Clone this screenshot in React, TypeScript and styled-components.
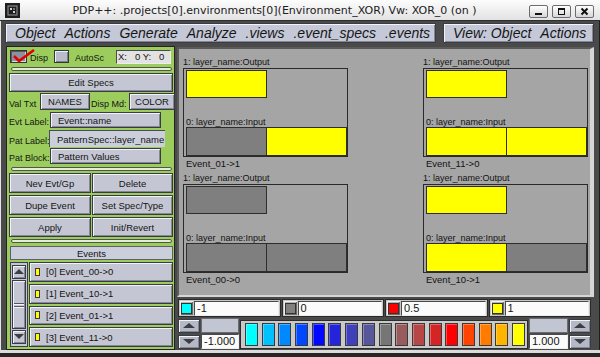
import styled, { createGlobalStyle, css } from "styled-components";

const GlobalStyle = createGlobalStyle`
  * { box-sizing: border-box; }
  html, body { margin: 0; padding: 0; background: #4a4a4a; }
  body {
    font-family: "Liberation Sans", Arial, sans-serif;
    color: #141414;
  }
`;

const raised = css`
  background: #c4c7d3;
  border: 1px solid #3a3c44;
  box-shadow: inset 1px 1px 0 #f2f3f9, inset -1px -1px 0 #858894;
`;

const sunken = css`
  border: 1px solid;
  border-color: #4a4a4a #ededed #ededed #4a4a4a;
`;

const Window = styled.div`
  width: 600px;
  height: 357px;
  display: flex;
  flex-direction: column;
  background: #4a4a4a;
  border-bottom: 4px solid #262626;
  overflow: hidden;
`;

const TitleBar = styled.header`
  height: 21px;
  flex: none;
  display: flex;
  align-items: center;
  padding: 0 6px 0 5px;
  background: linear-gradient(#fdfdfd, #e2e2e2);
  border-bottom: 1px solid #2e2e2e;
`;

const Title = styled.div`
  flex: 1;
  text-align: center;
  font-family: "DejaVu Sans", sans-serif;
  font-size: 11px;
  color: #202020;
  white-space: nowrap;
`;

const WinButtons = styled.div`
  display: flex;
  gap: 4px;
  margin-top: 3px;
`;

const WinButton = styled.div`
  width: 19px;
  height: 13px;
  display: grid;
  place-items: center;
  border: 1px solid #6c6c6c;
  border-radius: 2px;
  background: linear-gradient(#ffffff, #d6d6d6);
`;

const Body = styled.div`
  height: 329px;
  flex: none;
  display: flex;
  flex-direction: column;
  padding: 2px 5px 0 4px;
  border-left: 1px solid #e4e4e4;
  border-right: 1px solid #1e1e1e;
`;

const Footer = styled.div`
  height: 3px;
  flex: none;
  background: #dcdcdc;
`;

const MenuRow = styled.nav`
  display: flex;
  gap: 7px;
  height: 20px;
`;

const MenuBar = styled.div<{ $w?: number }>`
  ${raised};
  background: #c5c8d6;
  width: ${(p) => (p.$w ? `${p.$w}px` : "auto")};
  flex: ${(p) => (p.$w ? "none" : "1")};
  display: flex;
  align-items: center;
  gap: 9px;
  padding-left: 9px;
  overflow: hidden;
`;

const MenuItem = styled.span`
  font-size: 14px;
  font-style: italic;
  line-height: 1;
  color: #161616;
  white-space: nowrap;
`;

const Main = styled.div`
  display: flex;
  gap: 2px;
  height: 304px;
  margin-top: 3px;
  padding-left: 1px;
`;

/* left control panel */
const Panel = styled.aside`
  width: 169px;
  flex: none;
  display: flex;
  flex-direction: column;
  padding: 3px 1px 0 2px;
  background: #9ccd5c;
  border: 1px solid #242424;
  font-size: 9.5px;
`;

const Row = styled.div<{ $h: number; $mt: number }>`
  display: flex;
  align-items: flex-end;
  height: ${(p) => p.$h}px;
  margin-top: ${(p) => p.$mt}px;
`;

const Label = styled.span<{ $w?: number; $ml?: number }>`
  flex: none;
  width: ${(p) => (p.$w ? `${p.$w}px` : "auto")};
  margin-left: ${(p) => p.$ml ?? 0}px;
  font-size: 9px;
  line-height: 12px;
  white-space: nowrap;
`;

const Toggle = styled.div<{ $on?: boolean; $w: number; $ml: number }>`
  position: relative;
  flex: none;
  width: ${(p) => p.$w}px;
  height: 13px;
  margin-left: ${(p) => p.$ml}px;
  margin-bottom: 1px;
  border: 1px solid #34363c;
  background: ${(p) => (p.$on ? "#8d919d" : "#b9bdc9")};
  box-shadow: ${(p) =>
    p.$on
      ? "inset 1px 1px 0 #55585f, inset -1px -1px 0 #d8dae2"
      : "inset 1px 1px 0 #eef0f6, inset -1px -1px 0 #7c7f8a"};
  svg {
    position: absolute;
    left: 1px;
    top: -4px;
  }
`;

const Coords = styled.div`
  ${sunken};
  width: 55px;
  height: 14px;
  margin: 0 2px 0 auto;
  padding-left: 1px;
  background: #e2e2e2;
  line-height: 12px;
  white-space: pre;
`;

const Separator = styled.div<{ $mt: number }>`
  height: 4px;
  margin: ${(p) => p.$mt}px 1px 0 2px;
  border: 1px solid #4d5846;
  border-radius: 2px;
  background: #e6ecdc;
`;

const PanelButton = styled.div<{ $w?: number; $ml?: number }>`
  ${raised};
  flex: ${(p) => (p.$w ? "none" : "1")};
  width: ${(p) => (p.$w ? `${p.$w}px` : "auto")};
  height: 100%;
  margin-left: ${(p) => p.$ml ?? 0}px;
  display: flex;
  align-items: center;
  justify-content: center;
  white-space: nowrap;
`;

const TextField = styled.div<{ $w: number; $flat?: boolean }>`
  flex: none;
  width: ${(p) => p.$w}px;
  height: 100%;
  display: flex;
  align-items: center;
  padding-left: 7px;
  white-space: nowrap;
  ${(p) =>
    p.$flat
      ? css`
          background: #cbcfdb;
          border-top: 1px solid #4a4c54;
          border-left: 1px solid #4a4c54;
        `
      : raised}
`;

const ButtonGrid = styled.div`
  display: grid;
  grid-template-columns: 82px 81px;
  grid-auto-rows: 20px;
  gap: 2px 1px;
  margin-top: 2px;
`;

const EventsHeader = styled.div`
  height: 14px;
  margin: 3px 0 0 1px;
  display: flex;
  align-items: center;
  justify-content: center;
  background: #cbcedb;
  border: 1px solid #5d6069;
`;

const EventList = styled.div`
  display: flex;
  gap: 1px;
  height: 85px;
  margin: 2px 0 0 1px;
`;

const ScrollBar = styled.div`
  width: 18px;
  flex: none;
  display: flex;
  flex-direction: column;
  gap: 1px;
  padding: 2px 1px;
  background: #c4c7d3;
  border: 1px solid #3c3e46;
`;

const ScrollArrow = styled.div`
  ${raised};
  height: 14px;
  flex: none;
  display: grid;
  place-items: center;
`;

const ScrollThumb = styled.div`
  ${raised};
  flex: 1;
  display: flex;
  flex-direction: column;
  justify-content: center;
  gap: 2px;
  padding: 0 1px;
  span {
    height: 1px;
    background: #55585f;
    box-shadow: 0 1px 0 #f4f5fa;
  }
`;

const Items = styled.div`
  flex: 1;
  display: flex;
  flex-direction: column;
  gap: 2px;
`;

const EventItem = styled.div`
  ${raised};
  flex: 1;
  display: flex;
  align-items: center;
  padding-left: 5px;
  white-space: nowrap;
`;

const Marker = styled.i`
  width: 5px;
  height: 8px;
  margin-right: 6px;
  background: #ffff00;
  border: 1px solid #3a3a3a;
`;

/* right side: pattern view */
const RightCol = styled.section`
  flex: 1;
  display: flex;
  flex-direction: column;
  padding-top: 1px;
`;

const View = styled.div`
  height: 250px;
  flex: none;
  display: grid;
  grid-template-columns: 165px 165px;
  grid-template-rows: auto auto;
  column-gap: 75px;
  row-gap: 3px;
  align-content: start;
  padding: 7px 0 0 4px;
  background: #a5a5a5;
  border-style: solid;
  border-width: 2px 4px 2px 2px;
  border-color: #5a5a5a #d6d6d6 #d6d6d6 #5a5a5a;
`;

const Block = styled.div`
  display: flex;
  flex-direction: column;
`;

const LayerLabel = styled.div<{ $lh: number }>`
  font-size: 9px;
  line-height: ${(p) => p.$lh}px;
  color: #121212;
  white-space: nowrap;
`;

const PatternBox = styled.div`
  height: 89px;
  display: flex;
  flex-direction: column;
  justify-content: space-between;
  padding: 1px 0 0 2px;
  border: 1px solid #2a2a2a;
`;

const Cell = styled.div<{ $on: boolean; $h: number }>`
  width: 81px;
  height: ${(p) => p.$h}px;
  background: ${(p) => (p.$on ? "#ffff00" : "#7f7f7f")};
  border: 1px solid #2e2e2e;
  & + & {
    margin-left: -1px;
  }
`;

const CellRow = styled.div`
  display: flex;
`;

const EventName = styled.div`
  margin-top: 1px;
  padding-left: 3px;
  font-size: 9.5px;
  line-height: 11px;
  color: #121212;
`;

/* color scale */
const ScaleArea = styled.div`
  height: 50px;
  margin-top: 2px;
  display: flex;
  flex-direction: column;
  gap: 1px;
`;

const ScaleRow = styled.div`
  display: grid;
  grid-template-columns: repeat(4, 1fr);
  gap: 1px;
  height: 18px;
  padding: 0 3px 0 1px;
`;

const ScaleItem = styled.div`
  display: flex;
  align-items: center;
  gap: 1px;
  padding: 0 1px;
  background: #c6c6c6;
  border: 1px solid #2a2a2a;
`;

const SwatchButton = styled.div<{ $c: string }>`
  width: 13px;
  height: 14px;
  flex: none;
  display: grid;
  place-items: center;
  background: #b6b6b6;
  box-shadow: inset 1px 1px 0 #f0f0f0, inset -1px -1px 0 #6a6a6a;
  &::after {
    content: "";
    width: 9px;
    height: 9px;
    background: ${(p) => p.$c};
    border: 1px solid #333;
  }
`;

const ValueField = styled.div<{ $h: number }>`
  ${sunken};
  flex: 1;
  height: ${(p) => p.$h}px;
  padding-left: 2px;
  background: #fbfbfb;
  font-size: 11px;
  line-height: ${(p) => p.$h - 2}px;
  white-space: nowrap;
`;

const ScaleBottom = styled.div`
  display: flex;
  gap: 1px;
  flex: 1;
  padding-left: 1px;
`;

const Spin = styled.div`
  width: 22px;
  flex: none;
  display: flex;
  flex-direction: column;
  gap: 2px;
  padding-top: 1px;
`;

const SpinButton = styled.div`
  ${raised};
  background: #b5b9c5;
  flex: 1;
  display: grid;
  place-items: center;
`;

const RangeBox = styled.div<{ $w: number }>`
  width: ${(p) => p.$w}px;
  flex: none;
  display: flex;
  flex-direction: column;
  gap: 1px;
  div:first-child {
    flex: 1;
    background: #c2c5d2;
    border: 1px solid #6a6c74;
  }
`;

const SwatchPanel = styled.div`
  width: 288px;
  flex: none;
  margin-top: 2px;
  display: flex;
  align-items: center;
  justify-content: space-between;
  padding: 0 2px 0 4px;
  background: #c9c9c9;
  border: 1px solid #2c2c2c;
`;

const Swatch = styled.div<{ $c: string }>`
  width: 13px;
  height: 23px;
  background: ${(p) => p.$c};
  border: 1px solid #3a3a3a;
  box-shadow: inset 1px 1px 0 rgba(255, 255, 255, 0.3);
`;

const events = [
  { name: "Event_01->1", out: true, inp: [false, true] },
  { name: "Event_11->0", out: true, inp: [true, true] },
  { name: "Event_00->0", out: false, inp: [false, false] },
  { name: "Event_10->1", out: true, inp: [true, false] },
];

const scale = [
  "#00ffff", "#00c0ff", "#0088ff", "#0048ff", "#0008ff", "#2424da",
  "#4040ba", "#56569a", "#767676", "#985c5c", "#b84646", "#d62424",
  "#ff0000", "#ff4400", "#ff7c00", "#ffb400", "#ffff00",
];

const UpArrow = ({ w = 10 }: { w?: number }) => (
  <svg width={w} height="6" viewBox={`0 0 ${w} 6`}>
    <polygon points={`0,5 ${w / 2},0 ${w},5`} fill="#3c3e44" />
  </svg>
);

const DownArrow = ({ w = 10 }: { w?: number }) => (
  <svg width={w} height="6" viewBox={`0 0 ${w} 6`}>
    <polygon points={`0,0 ${w / 2},5 ${w},0`} fill="#3c3e44" />
  </svg>
);

export default function App() {
  return (
    <>
      <GlobalStyle />
      <Window>
        <TitleBar>
          <svg width="15" height="15" viewBox="0 0 15 15">
            <rect width="15" height="15" fill="#1e1e1e" />
            <rect x="3" y="3" width="9" height="9" fill="none" stroke="#9a9a9a" />
            <rect x="5" y="5" width="2" height="2" fill="#cfcfcf" />
            <rect x="8" y="8" width="2" height="2" fill="#cfcfcf" />
            <rect x="8" y="5" width="2" height="2" fill="#707070" />
          </svg>
          <Title>PDP++: .projects[0].environments[0](Environment_XOR) Vw: XOR_0 (on )</Title>
          <WinButtons>
            <WinButton>
              <svg width="9" height="9" viewBox="0 0 9 9">
                <rect x="1" y="6" width="7" height="2" fill="#111" />
              </svg>
            </WinButton>
            <WinButton>
              <svg width="9" height="9" viewBox="0 0 9 9">
                <rect x="1.5" y="1.5" width="6" height="6" fill="none" stroke="#111" />
                <rect x="1" y="1" width="7" height="2" fill="#111" />
              </svg>
            </WinButton>
            <WinButton>
              <svg width="9" height="9" viewBox="0 0 9 9">
                <path d="M1.5 1.5 L7.5 7.5 M7.5 1.5 L1.5 7.5" stroke="#111" strokeWidth="2" />
              </svg>
            </WinButton>
          </WinButtons>
        </TitleBar>

        <Body>
          <MenuRow>
            <MenuBar $w={431}>
              <MenuItem>Object</MenuItem>
              <MenuItem>Actions</MenuItem>
              <MenuItem>Generate</MenuItem>
              <MenuItem>Analyze</MenuItem>
              <MenuItem>.views</MenuItem>
              <MenuItem>.event_specs</MenuItem>
              <MenuItem>.events</MenuItem>
            </MenuBar>
            <MenuBar>
              <MenuItem>View: Object</MenuItem>
              <MenuItem>Actions</MenuItem>
            </MenuBar>
          </MenuRow>

          <Main>
            <Panel>
              <Row $h={14} $mt={0}>
                <Toggle $on $w={17} $ml={1}>
                  <svg width="24" height="16" viewBox="0 0 24 16">
                    <path d="M2 9 L7 14 L22 3" fill="none" stroke="#e00000" strokeWidth="2.5" />
                  </svg>
                </Toggle>
                <Label $ml={3}>Disp</Label>
                <Toggle $w={15} $ml={6} />
                <Label $ml={6}>AutoSc</Label>
                <Coords>{"X:   0 Y:   0"}</Coords>
              </Row>
              <Separator $mt={3} />
              <Row $h={19} $mt={2}>
                <PanelButton>Edit Specs</PanelButton>
              </Row>
              <Row $h={17} $mt={1}>
                <Label $w={31}>Val Txt</Label>
                <PanelButton $w={50}>NAMES</PanelButton>
                <Label $w={38} $ml={1}>Disp Md:</Label>
                <PanelButton $w={46}>COLOR</PanelButton>
              </Row>
              <Row $h={16} $mt={2}>
                <Label $w={41}>Evt Label:</Label>
                <TextField $w={111}>Event::name</TextField>
              </Row>
              <Row $h={17} $mt={2}>
                <Label $w={40}>Pat Label:</Label>
                <TextField $w={116} $flat>
                  PatternSpec::layer_name
                </TextField>
              </Row>
              <Row $h={16} $mt={1}>
                <Label $w={41}>Pat Block:</Label>
                <TextField $w={111}>Pattern Values</TextField>
              </Row>
              <Separator $mt={3} />
              <ButtonGrid>
                <PanelButton>Nev Evt/Gp</PanelButton>
                <PanelButton>Delete</PanelButton>
                <PanelButton>Dupe Event</PanelButton>
                <PanelButton>Set Spec/Type</PanelButton>
                <PanelButton>Apply</PanelButton>
                <PanelButton>Init/Revert</PanelButton>
              </ButtonGrid>
              <Separator $mt={2} />
              <EventsHeader>Events</EventsHeader>
              <EventList>
                <ScrollBar>
                  <ScrollArrow>
                    <UpArrow />
                  </ScrollArrow>
                  <ScrollThumb>
                    <span />
                    <span />
                  </ScrollThumb>
                  <ScrollArrow>
                    <DownArrow />
                  </ScrollArrow>
                </ScrollBar>
                <Items>
                  {["[0] Event_00->0", "[1] Event_10->1", "[2] Event_01->1", "[3] Event_11->0"].map((e) => (
                    <EventItem key={e}>
                      <Marker />
                      {e}
                    </EventItem>
                  ))}
                </Items>
              </EventList>
            </Panel>

            <RightCol>
              <View>
                {events.map((ev) => (
                  <Block key={ev.name}>
                    <LayerLabel $lh={12}>1: layer_name:Output</LayerLabel>
                    <PatternBox>
                      <Cell $on={ev.out} $h={28} />
                      <div>
                        <LayerLabel $lh={10}>0: layer_name:Input</LayerLabel>
                        <CellRow>
                          {ev.inp.map((v, i) => (
                            <Cell key={i} $on={v} $h={29} />
                          ))}
                        </CellRow>
                      </div>
                    </PatternBox>
                    <EventName>{ev.name}</EventName>
                  </Block>
                ))}
              </View>

              <ScaleArea>
                <ScaleRow>
                  {[
                    ["#00ffff", "-1"],
                    ["#808080", "0"],
                    ["#ff0000", "0.5"],
                    ["#ffff00", "1"],
                  ].map(([c, v]) => (
                    <ScaleItem key={v}>
                      <SwatchButton $c={c} />
                      <ValueField $h={15}>{v}</ValueField>
                    </ScaleItem>
                  ))}
                </ScaleRow>
                <ScaleBottom>
                  <Spin>
                    <SpinButton>
                      <UpArrow w={12} />
                    </SpinButton>
                    <SpinButton>
                      <DownArrow w={12} />
                    </SpinButton>
                  </Spin>
                  <RangeBox $w={38}>
                    <div />
                    <ValueField $h={14}>-1.000</ValueField>
                  </RangeBox>
                  <SwatchPanel>
                    {scale.map((c) => (
                      <Swatch key={c} $c={c} />
                    ))}
                  </SwatchPanel>
                  <RangeBox $w={39}>
                    <div />
                    <ValueField $h={14}>1.000</ValueField>
                  </RangeBox>
                  <Spin>
                    <SpinButton>
                      <UpArrow w={12} />
                    </SpinButton>
                    <SpinButton>
                      <DownArrow w={12} />
                    </SpinButton>
                  </Spin>
                </ScaleBottom>
              </ScaleArea>
            </RightCol>
          </Main>
        </Body>
        <Footer />
      </Window>
    </>
  );
}
